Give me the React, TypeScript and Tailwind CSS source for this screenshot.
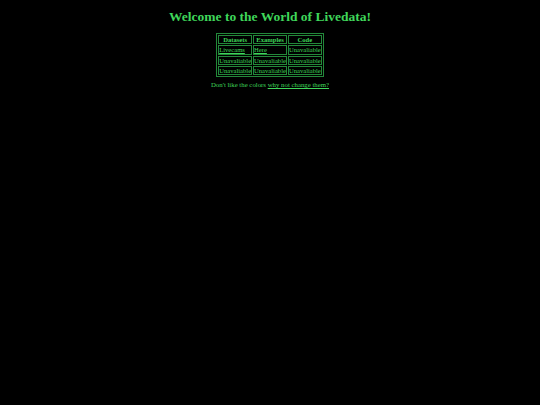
export default function App() {
  const rows = [
    ["Livecams", "Here", "Unavaliable"],
    ["Unavaliable", "Unavaliable", "Unavaliable"],
    ["Unavaliable", "Unavaliable", "Unavaliable"],
  ];
  return (
    <div className="min-h-[405px] w-full bg-black font-['Liberation_Serif',serif] text-[#3fd65a]">
      <h1 className="pt-[8px] text-center text-[13.5px] font-bold leading-[17px]">
        Welcome to the World of Livedata!
      </h1>
      <div className="mt-[8px] flex justify-center">
        <table className="border-separate border-spacing-[1px] border border-[#23883a] text-[6.6px] leading-[7.3px]">
          <thead>
            <tr>
              {["Datasets", "Examples", "Code"].map((h) => (
                <th key={h} className="border border-[#23883a] px-[1px] py-0 font-bold">
                  {h}
                </th>
              ))}
            </tr>
          </thead>
          <tbody>
            {rows.map((r, i) => (
              <tr key={i}>
                {r.map((c, j) => (
                  <td key={j} className="border border-[#23883a] px-0 py-0">
                    {c === "Livecams" || c === "Here" ? <span className="underline">{c}</span> : c}
                  </td>
                ))}
              </tr>
            ))}
          </tbody>
        </table>
      </div>
      <p className="mt-[3px] text-center text-[6.8px]">
        Don't like the colors <span className="underline">why not change them?</span>
      </p>
    </div>
  );
}
